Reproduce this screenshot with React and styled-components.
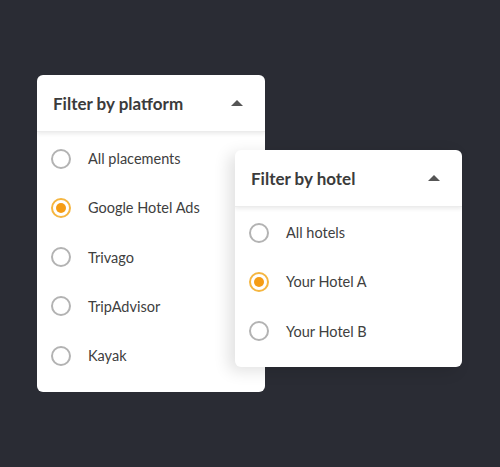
import React from "react";
import styled, { createGlobalStyle } from "styled-components";

const Global = createGlobalStyle`
  html, body { margin: 0; padding: 0; background: #2a2c34; }
  body { font-family: Lato, "Noto Sans", sans-serif; }
`;

const Stage = styled.div`
  width: 500px;
  height: 467px;
  display: flex;
  align-items: flex-start;
  padding-left: 37px;
  box-sizing: border-box;
  overflow: hidden;
`;

const Card = styled.div`
  width: ${(p) => p.$w}px;
  margin-top: ${(p) => p.$top}px;
  margin-left: ${(p) => p.$ml || 0}px;
  background: #fff;
  border-radius: 6px;
  overflow: hidden;
  position: relative;
  box-shadow: ${(p) => (p.$raised ? "-6px 4px 16px rgba(0,0,0,0.12)" : "none")};
`;

const Header = styled.div`
  height: 57px;
  display: flex;
  align-items: center;
  justify-content: space-between;
  padding: 0 22px 0 16px;
  box-shadow: 0 2px 4px rgba(0, 0, 0, 0.08);
  border-bottom: 1px solid #ececec;
  box-sizing: border-box;
  position: relative;
`;

const Title = styled.span`
  font-size: 17px;
  font-weight: 700;
  color: #3b3b3b;
`;

const Caret = styled.span`
  width: 0;
  height: 0;
  border-left: 6px solid transparent;
  border-right: 6px solid transparent;
  border-bottom: 6px solid #555;
  margin-top: -1px;
`;

const List = styled.div`
  display: flex;
  flex-direction: column;
  padding: ${(p) => p.$pt}px 0 ${(p) => p.$pb}px;
`;

const Item = styled.label`
  height: 49.25px;
  display: flex;
  align-items: center;
  gap: 17px;
  padding-left: 14px;
  font-size: 14.5px;
  color: #404040;
`;

const Radio = styled.span`
  width: 20px;
  height: 20px;
  box-sizing: border-box;
  border-radius: 50%;
  border: 2px solid ${(p) => (p.$on ? "#f5b641" : "#b3b3b3")};
  display: flex;
  align-items: center;
  justify-content: center;
  flex: none;
  &::after {
    content: "";
    width: 10px;
    height: 10px;
    border-radius: 50%;
    background: ${(p) => (p.$on ? "#f59c14" : "transparent")};
  }
`;

function Dropdown({ title, items, selected, pt, pb, ...rest }) {
  return (
    <Card {...rest}>
      <Header>
        <Title>{title}</Title>
        <Caret />
      </Header>
      <List $pt={pt} $pb={pb}>
        {items.map((it) => (
          <Item key={it}>
            <Radio $on={it === selected} />
            {it}
          </Item>
        ))}
      </List>
    </Card>
  );
}

export default function App() {
  return (
    <>
      <Global />
      <Stage>
        <Dropdown
          $w={228}
          $top={75}
          pt={2}
          pb={12}
          title="Filter by platform"
          items={["All placements", "Google Hotel Ads", "Trivago", "TripAdvisor", "Kayak"]}
          selected="Google Hotel Ads"
        />
        <Dropdown
          $w={227}
          $top={150}
          $ml={-30}
          $raised
          pt={1}
          pb={11}
          title="Filter by hotel"
          items={["All hotels", "Your Hotel A", "Your Hotel B"]}
          selected="Your Hotel A"
        />
      </Stage>
    </>
  );
}
